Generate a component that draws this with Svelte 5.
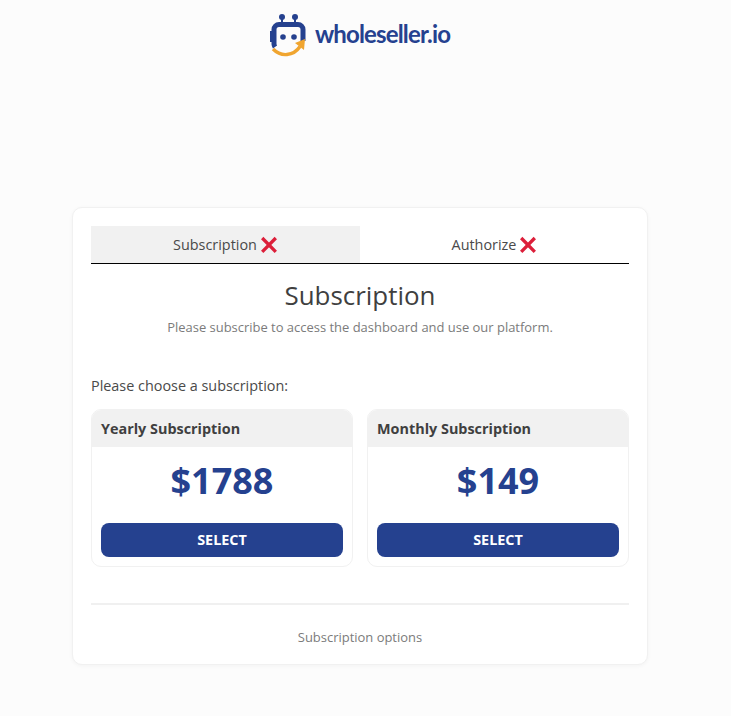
<script>
  const plans = [
    { name: 'Yearly Subscription', price: '$1788' },
    { name: 'Monthly Subscription', price: '$149' }
  ];
  const tabs = [
    { label: 'Subscription', active: true },
    { label: 'Authorize', active: false }
  ];
</script>

<div class="page">
  <header class="brand">
    <svg class="logo" width="38" height="44" viewBox="0 0 38 44" aria-hidden="true">
      <circle cx="13" cy="4" r="3" fill="#25418f" />
      <circle cx="26" cy="4" r="3" fill="#25418f" />
      <path d="M13 5v6M26 5v6" stroke="#25418f" stroke-width="2" />
      <path d="M6 34a6 6 0 0 1-1-3V16.500a5 5 0 0 1 5-5h19a5 5 0 0 1 5 5V28" fill="none" stroke="#25418f" stroke-width="5" />
      <path d="M1 18h3v11H1z" fill="#25418f" />
      <circle cx="14" cy="24" r="2.800" fill="#25418f" />
      <circle cx="25" cy="24" r="2.800" fill="#25418f" />
      <path d="M4 36c4 4 9 6 14 5.500 6-.6 10-3.500 13-8" fill="none" stroke="#f0a530" stroke-width="3.400" />
      <path d="M26 30l10-4 -1 11z" fill="#f0a530" />
    </svg>
    <span class="wordmark">wholeseller.io</span>
  </header>

  <main class="card">
    <nav class="tabs">
      {#each tabs as tab}
        <div class="tab" class:active={tab.active}>
          <span>{tab.label}</span>
          <svg width="18" height="18" viewBox="0 0 18 18" aria-hidden="true">
            <path d="M2.200 2 15.800 15.800M15.800 2 2.200 15.800" fill="none" stroke="#dc1f3a" stroke-width="3.300" />
          </svg>
        </div>
      {/each}
    </nav>

    <h1>Subscription</h1>
    <p class="sub">Please subscribe to access the dashboard and use our platform.</p>

    <p class="choose">Please choose a subscription:</p>

    <div class="plans">
      {#each plans as plan}
        <section class="plan">
          <h2>{plan.name}</h2>
          <div class="body">
            <div class="price">{plan.price}</div>
            <button type="button">SELECT</button>
          </div>
        </section>
      {/each}
    </div>

    <footer>Subscription options</footer>
  </main>
</div>

<style>
  :global(body) {
    margin: 0;
    background: #fcfcfc;
    font-family: "Open Sans", sans-serif;
    color: #403f3f;
  }
  .page {
    height: 716px;
    overflow: hidden;
    padding-top: 13px;
    box-sizing: border-box;
  }
  .brand {
    display: flex;
    justify-content: center;
    align-items: flex-start;
    gap: 8px;
    height: 194px;
    padding-right: 12px;
  }
  .logo {
    flex: none;
  }
  .wordmark {
    font-family: "Lato", sans-serif;
    font-size: 24px;
    font-weight: 700;
    letter-spacing: -0.85px;
    color: #25418f;
    line-height: 42px;
  }
  .card {
    width: 576px;
    height: 458px;
    margin-left: 72px;
    box-sizing: border-box;
    padding: 18px 18px 0;
    background: #fff;
    border: 1px solid #f1f1f1;
    border-radius: 10px;
    box-shadow: 0 1px 4px rgba(0, 0, 0, 0.04);
  }
  .tabs {
    display: grid;
    grid-template-columns: 1fr 1fr;
    border-bottom: 1px solid #000;
  }
  .tab {
    height: 37px;
    display: flex;
    align-items: center;
    justify-content: center;
    gap: 3px;
    font-size: 14.400px;
    color: #4a4a4a;
  }
  .tab.active {
    background: #f1f1f1;
  }
  h1 {
    margin: 15px 0 0;
    font-size: 25.920px;
    font-weight: 400;
    line-height: 32px;
    text-align: center;
    color: #403f3f;
  }
  .sub {
    margin: 7px 0 0;
    font-size: 12.960px;
    line-height: 18px;
    text-align: center;
    color: #7b7b7b;
  }
  .choose {
    margin: 40px 0 0;
    font-size: 14.400px;
    line-height: 19px;
    color: #4a4a4a;
  }
  .plans {
    display: grid;
    grid-template-columns: 1fr 1fr;
    gap: 14px;
    margin-top: 14px;
  }
  .plan {
    height: 158px;
    box-sizing: border-box;
    border: 1px solid #f1f1f1;
    border-radius: 10px;
    overflow: hidden;
  }
  h2 {
    margin: 0;
    height: 37px;
    padding: 0 9px;
    background: #f1f1f1;
    font-size: 14.400px;
    font-weight: 700;
    line-height: 38px;
    color: #403f3f;
  }
  .body {
    padding: 0 9px;
  }
  .price {
    margin-top: 10px;
    height: 66px;
    font-size: 36px;
    font-weight: 700;
    line-height: 48px;
    text-align: center;
    color: #25418f;
  }
  button {
    display: block;
    width: 100%;
    height: 34px;
    padding: 0 0 2px;
    border: 0;
    border-radius: 8px;
    background: #25418f;
    color: #fff;
    font: 700 14.400px "Open Sans", sans-serif;
  }
  footer {
    margin-top: 36px;
    padding-top: 23px;
    border-top: 2px solid #f0f0f0;
    font-size: 12.960px;
    line-height: 18px;
    text-align: center;
    color: #7b7b7b;
  }
</style>
